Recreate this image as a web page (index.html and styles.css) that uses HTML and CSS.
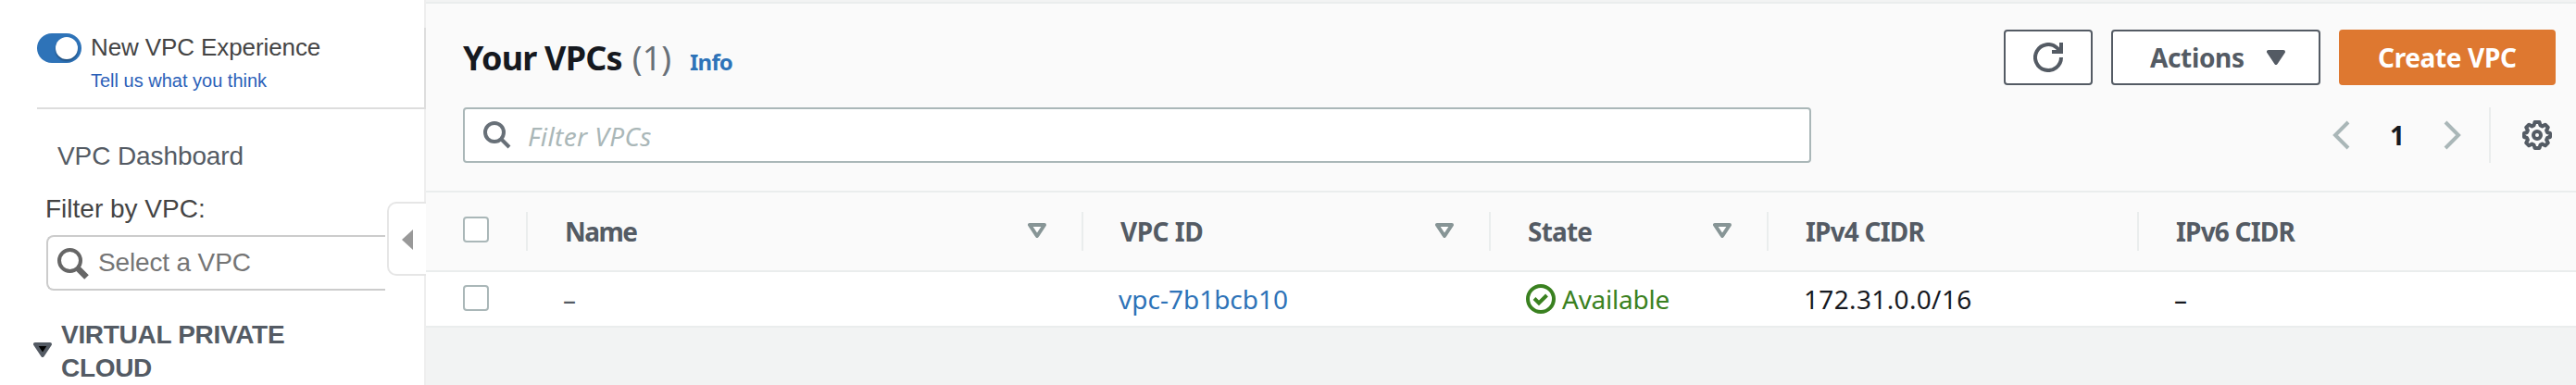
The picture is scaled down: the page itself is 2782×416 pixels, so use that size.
FILE: index.html
```html
<!DOCTYPE html>
<html lang="en">
<head>
<meta charset="utf-8">
<title>Your VPCs</title>
<link rel="stylesheet" href="styles.css">
</head>
<body>
<div class="app">
  <aside class="sidebar">
    <div class="experience">
      <span class="toggle"><span class="knob"></span></span>
      <div class="experience-text">
        <div class="experience-title">New VPC Experience</div>
        <a class="feedback">Tell us what you think</a>
      </div>
    </div>
    <a class="dashboard">VPC Dashboard</a>
    <div class="filter-label">Filter by VPC:</div>
    <div class="select-vpc">
      <svg class="select-icon" width="34" height="34" viewBox="0 0 34 34"><circle cx="13.5" cy="13.5" r="11.5" fill="none" stroke="#666" stroke-width="4"/><path d="M22 22l9.500 9.500" stroke="#666" stroke-width="6.500"/></svg>
      <span class="select-text">Select a VPC</span>
    </div>
    <div class="section">
      <svg class="section-caret" width="20" height="16" viewBox="0 0 20 16"><path d="M2 2h16l-8 12z" fill="#000" stroke="#545b64" stroke-width="4" stroke-linejoin="round"/></svg>
      <div class="section-title">VIRTUAL PRIVATE<br>CLOUD</div>
    </div>
    <div class="collapse"><svg width="12" height="22" viewBox="0 0 12 22"><path d="M12 0v22L0 11z" fill="#999"/></svg></div>
  </aside>
  <main class="main">
    <header class="header">
      <div class="title-row">
        <h1 class="title">Your VPCs</h1><span class="count">(1)</span><a class="info">Info</a>
        <div class="actions">
          <div class="btn refresh"><svg width="32" height="32" viewBox="0 0 32 32" fill="none" stroke="#545b64" stroke-width="4"><path d="M30 16a14 14 0 1 1-4.300-10.100L29 9.500M20 10h10V0"/></svg></div>
          <div class="btn menu"><span class="menu-text">Actions</span><svg width="20" height="16" viewBox="0 0 20 16"><path d="M2 2h16l-8 12z" fill="#545b64" stroke="#545b64" stroke-width="4" stroke-linejoin="round"/></svg></div>
          <div class="btn create">Create VPC</div>
        </div>
      </div>
      <div class="tools">
        <div class="filter">
          <svg width="30" height="30" viewBox="0 0 30 30" fill="none" stroke="#687078" stroke-width="4"><circle cx="12" cy="12" r="10"/><path d="M19 19l9 9"/></svg>
          <span class="filter-text">Filter VPCs</span>
        </div>
        <div class="pager">
          <svg width="20" height="32" viewBox="0 0 20 32" fill="none" stroke="#aab7b8" stroke-width="4"><path d="M18 2L4 16l14 14"/></svg>
          <span class="page">1</span>
          <svg width="20" height="32" viewBox="0 0 20 32" fill="none" stroke="#aab7b8" stroke-width="4"><path d="M2 2l14 14L2 30"/></svg>
        </div>
        <div class="settings">
          <svg width="32" height="32" viewBox="0 0 32 32" fill="none" stroke="#545b64" stroke-width="4" stroke-linejoin="round"><path d="M13.500 2h5l1 3.500 2 .9 3.300-1.700 3 3-1.700 3.300.9 2 3 1v4l-3 1-.9 2 1.700 3.300-3 3-3.300-1.700-2 .9-1 3.500h-5l-1-3.500-2-.9-3.300 1.700-3-3L5.900 21 5 19l-3-1v-4l3-1 .9-2-1.700-3.300 3-3 3.300 1.700 2-.9z"/><circle cx="16" cy="16" r="4"/></svg>
        </div>
      </div>
    </header>
    <div class="row head">
      <div class="check-cell"><span class="checkbox"></span></div>
      <div class="th"><span class="name-label">Name</span><svg class="sort" viewBox="0 0 20 16"><path d="M2 2h16l-8 12z"/></svg></div>
      <div class="th"><span class="id-label">VPC ID</span><svg class="sort" viewBox="0 0 20 16"><path d="M2 2h16l-8 12z"/></svg></div>
      <div class="th"><span>State</span><svg class="sort" viewBox="0 0 20 16"><path d="M2 2h16l-8 12z"/></svg></div>
      <div class="th"><span>IPv4 CIDR</span></div>
      <div class="th"><span>IPv6 CIDR</span></div>
    </div>
    <div class="row body">
      <div class="check-cell"><span class="checkbox"></span></div>
      <div class="td muted">–</div>
      <div class="td link">vpc-7b1bcb10</div>
      <div class="td state"><svg width="32" height="32" viewBox="0 0 32 32" fill="none" stroke="#3a8120" stroke-width="4"><circle cx="16" cy="16" r="14"/><path d="M9 15.500l5 5 8.500-8.500"/></svg><span class="state-text">Available</span></div>
      <div class="td cidr">172.31.0.0/16</div>
      <div class="td">–</div>
    </div>
  </main>
</div>
</body>
</html>
```
FILE: styles.css
```css
* { box-sizing: border-box; }
body { margin: 0; background: #f2f3f3; font-family: "Noto Sans", sans-serif; font-size: 28px; color: #16191f; }
svg { display: block; flex: none; }
.app { display: flex; width: 2782px; height: 416px; overflow: hidden; }

.sidebar { position: relative; width: 460px; flex: none; padding-top: 30px; background: #fff; box-shadow: inset -2px 0 #eee; font-family: "Liberation Sans", Arial, sans-serif; color: #444; white-space: nowrap; }
.experience { display: flex; height: 88px; margin-left: 40px; padding-top: 6px; border-right: 2px solid #ddd; border-bottom: 2px solid #ddd; }
.toggle { width: 48px; height: 32px; padding: 4px; border-radius: 16px; background: #2e73b8; }
.knob { display: block; width: 24px; height: 24px; margin-left: 16px; border-radius: 50%; background: #fff; box-shadow: 0 2px 2px rgba(0, 0, 0, .3); }
.experience-text { margin-left: 10px; }
.experience-title { font-size: 26px; line-height: 30px; letter-spacing: -.1px; }
.feedback { display: block; margin: 9px 0 0; font-size: 20px; line-height: 24px; color: #2a60b8; }
.dashboard { display: block; margin: 33px 0 0 62px; line-height: 36px; letter-spacing: -.1px; color: #545b64; }
.filter-label { margin: 21px 0 0 49px; line-height: 36px; }
.select-vpc { display: flex; width: 366px; height: 60px; margin: 10px 0 0 50px; padding: 12px 0 0 10px; border: 2px solid #ccc; border-right: 0; border-radius: 8px 0 0 8px; }
.select-text { margin-left: 10px; line-height: 36px; margin-top: -2px; letter-spacing: -.15px; color: #757575; }
.section { display: flex; margin: 30px 0 0 36px; font-weight: bold; line-height: 36px; color: #545b64; }
.section-caret { margin-top: 26px; }
.section-title { margin-left: 10px; letter-spacing: -.3px; }
.collapse { position: absolute; left: 418px; top: 218px; width: 42px; height: 80px; padding: 28px 0 0 14px; background: #fff; border: 2px solid #e6e6e6; border-right: 0; border-radius: 10px 0 0 10px; }

.main { flex: 1; padding-top: 2px; white-space: nowrap; }
.header { height: 206px; padding: 28px 22px 0 40px; background: #fafafa; border-top: 2px solid #eaeded; border-bottom: 2px solid #eaeded; }
.title-row { display: flex; align-items: baseline; height: 60px; line-height: 62px; }
.title { margin: 0; font-size: 36px; letter-spacing: -.8px; }
.count { margin-left: 11px; font-size: 36px; color: #687078; }
.info { margin-left: 20px; font-size: 24px; font-weight: bold; letter-spacing: -.8px; color: #2e73b8; }
.actions { display: flex; align-self: flex-start; gap: 20px; margin-left: auto; }
.btn { display: flex; align-items: center; height: 60px; border: 2px solid #545b64; border-radius: 4px; background: #fff; color: #545b64; font-weight: bold; line-height: 54px; letter-spacing: -.35px; }
.refresh { width: 96px; justify-content: center; }
.menu { width: 226px; padding-left: 40px; }
.menu-text { width: 126px; margin-top: -1px; }
.btn.create { width: 234px; padding-left: 40px; border-color: #de7830; background: #de7830; color: #fff; padding-bottom: 1px; }
.tools { display: flex; align-items: center; height: 60px; margin-top: 24px; }
.filter { display: flex; align-items: center; width: 1456px; height: 60px; padding-left: 20px; border: 2px solid #aab7b8; border-radius: 4px; background: #fff; }
.filter-text { margin: 2px 0 0 18px; font-style: italic; letter-spacing: .4px; color: #aab7b8; }
.pager { display: flex; align-items: center; margin-left: auto; }
.page { width: 101px; padding-left: 1px; text-align: center; font-weight: bold; }
.settings { width: 72px; height: 60px; margin-left: 29px; padding: 14px 0 0 34px; border-left: 2px solid #eaeded; }

.row { display: grid; grid-template-columns: 108px 600px 440px 300px 400px 1fr; align-items: center; border-bottom: 2px solid #eaeded; }
.head { height: 86px; background: #fafafa; }
.body { height: 60px; background: #fff; }
.check-cell { padding: 0 0 2px 40px; }
.head .check-cell { padding-bottom: 4px; }
.checkbox { display: block; width: 28px; height: 28px; border: 2px solid #aab7b8; border-radius: 4px; background: #fff; }
.th { display: flex; align-items: center; justify-content: space-between; height: 42px; padding: 0 38px 2px 40px; border-left: 2px solid #eaeded; font-weight: bold; letter-spacing: -.8px; line-height: 40px; color: #545b64; }
.th span { padding-top: 1px; }
.name-label { letter-spacing: -1.5px; }
.id-label { letter-spacing: -.5px; }
.sort { width: 20px; height: 16px; fill: #fff; stroke: #879596; stroke-width: 4; stroke-linejoin: round; }
.td { padding-left: 40px; line-height: 38px; }
.muted { color: #545b64; }
.link { color: #2e73b8; }
.state { display: flex; align-items: center; color: #3a8120; }
.state-text { margin-left: 7px; letter-spacing: -.25px; }
.cidr { letter-spacing: .35px; }
```
